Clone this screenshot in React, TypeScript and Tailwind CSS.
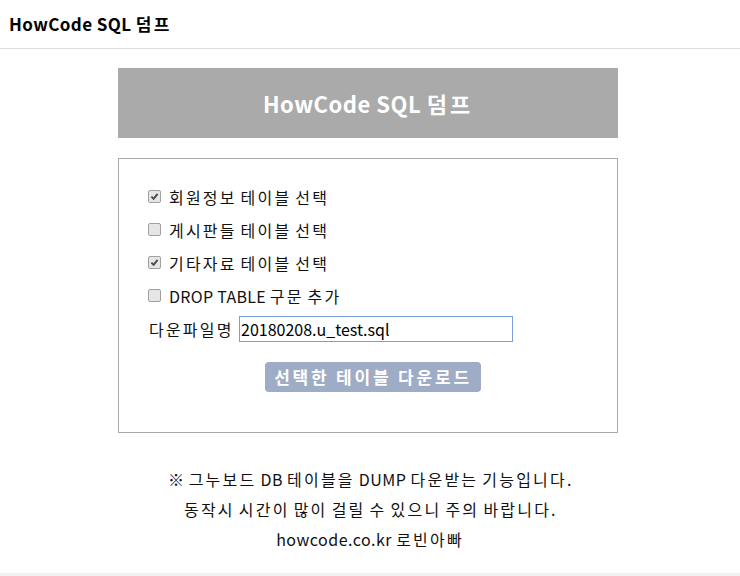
const font = { fontFamily: '"Noto Sans CJK KR", "Noto Sans", sans-serif' };

// Korean runs get a little extra spacing so the lines keep the reference width
function Ko({ text, wide = 'tracking-[2px]' }: { text: string; wide?: string }) {
  const parts = text.split(/([\uAC00-\uD7A3]+)/);
  return (
    <>
      {parts.map((p, i) =>
        /[\uAC00-\uD7A3]/.test(p) ? (
          <span key={i} className={wide}>
            {p}
          </span>
        ) : (
          <span key={i}>{p}</span>
        )
      )}
    </>
  );
}

function Check({ checked }: { checked: boolean }) {
  return (
    <span className="inline-flex items-center justify-center w-[13px] h-[13px] border border-[#a0a0a0] bg-[#e6e6e6] rounded-[2px]">
      {checked && (
        <svg width="9" height="9" viewBox="0 0 9 9">
          <path d="M1.4 4.6 L3.6 6.8 L7.6 1.8" fill="none" stroke="#4a4a4a" strokeWidth="1.9" />
        </svg>
      )}
    </span>
  );
}

export default function App() {
  const tables = [
    { label: '회원정보 테이블 선택', checked: true },
    { label: '게시판들 테이블 선택', checked: false },
    { label: '기타자료 테이블 선택', checked: true },
    { label: 'DROP TABLE 구문 추가', checked: false },
  ];

  return (
    <div className="w-[740px] h-[576px] bg-white text-[#111] overflow-hidden" style={font}>
      {/* top bar */}
      <div className="h-[49px] border-b border-[#dddddd] flex items-center pl-[9px]">
        <span className="text-[17px] font-bold text-black tracking-[0.4px]">
          <Ko text="HowCode SQL 덤프" wide="tracking-[2.5px]" />
        </span>
      </div>

      <div className="w-[500px] ml-[118px] mt-[19px]">
        <div className="h-[70px] bg-[#aaaaaa] flex items-center justify-center">
          <span className="text-[22px] font-bold text-white tracking-[0.5px]">
            <Ko text="HowCode SQL 덤프" wide="tracking-[3px]" />
          </span>
        </div>

        <div className="mt-[20px] h-[275px] border border-[#aaaaaa] pl-[29px] pt-[21px]">
          {tables.map((t) => (
            <div key={t.label} className="h-[33px] flex items-center gap-[8px] text-[16px]">
              <Check checked={t.checked} />
              <span className="tracking-[0.3px]">
                <Ko text={t.label} wide="tracking-[2.2px]" />
              </span>
            </div>
          ))}
          <div className="h-[33px] flex items-center text-[16px]">
            <span className="w-[91px] pl-[1px] tracking-[2.2px]">다운파일명</span>
            <input
              defaultValue="20180208.u_test.sql"
              className="w-[274px] h-[26px] border border-[#7b9fd8] px-[1px] text-[16px] text-black outline-none"
              style={font}
            />
          </div>
          <button className="mt-[17px] ml-[117px] w-[216px] h-[30px] rounded-[4px] bg-[#9eacc6] text-white text-[17px] font-bold tracking-[2.8px] flex items-center justify-center">
            선택한 테이블 다운로드
          </button>
        </div>
      </div>

      <div className="mt-[31px] text-center text-[16px] leading-[30px] tracking-[0.5px]">
        <p>
          <Ko text="※ 그누보드 DB 테이블을 DUMP 다운받는 기능입니다." wide="tracking-[2.2px]" />
        </p>
        <p>
          <Ko text="동작시 시간이 많이 걸릴 수 있으니 주의 바랍니다." wide="tracking-[2.2px]" />
        </p>
        <p>
          <Ko text="howcode.co.kr 로빈아빠" wide="tracking-[2.2px]" />
        </p>
      </div>

      <div className="mt-[19px] h-[10px] bg-[#f0f0f0]" />
    </div>
  );
}
